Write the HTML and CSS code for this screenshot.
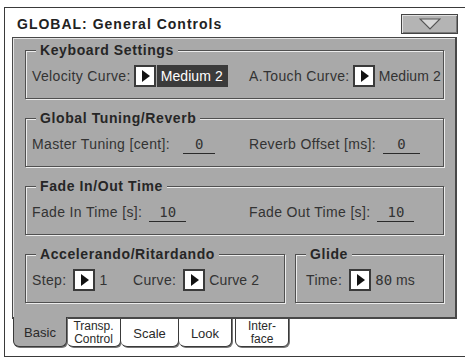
FILE: index.html
```html
<!DOCTYPE html>
<html lang="en">

<head>
    <meta charset="UTF-8">
    <meta name="viewport" content="width=device-width, initial-scale=1.0">
    <title>GLOBAL: General Controls</title>
    <link rel="stylesheet" href="styles.css">
</head>

<body>
    <div class="screen">
        <div class="titlebar">
            <h1 class="titlebar__title">GLOBAL: General Controls</h1>
            <button class="titlebar__menu">
                <svg width="22" height="12" viewBox="0 0 22 12">
                    <polygon points="1,1 21,1 11,11" fill="#d8d8d8" stroke="#555" stroke-width="1.2" />
                </svg>
            </button>
        </div>

        <div class="panel">
            <div class="group">
                <div class="group__title">Keyboard Settings</div>
                <div class="group__row">
                    <div class="param">
                        <span class="param__label">Velocity Curve:</span>
                        <span class="arrow"></span>
                        <span class="param__value param__value--selected">Medium 2</span>
                    </div>
                    <div class="param">
                        <span class="param__label">A.Touch Curve:</span>
                        <span class="arrow"></span>
                        <span class="param__value">Medium 2</span>
                    </div>
                </div>
            </div>

            <div class="group">
                <div class="group__title">Global Tuning/Reverb</div>
                <div class="group__row">
                    <div class="param">
                        <span class="param__label">Master Tuning [cent]:</span>
                        <span class="field field--short">0</span>
                    </div>
                    <div class="param">
                        <span class="param__label">Reverb Offset [ms]:</span>
                        <span class="field">0</span>
                    </div>
                </div>
            </div>

            <div class="group">
                <div class="group__title">Fade In/Out Time</div>
                <div class="group__row">
                    <div class="param">
                        <span class="param__label">Fade In Time [s]:</span>
                        <span class="field">10</span>
                    </div>
                    <div class="param">
                        <span class="param__label">Fade Out Time [s]:</span>
                        <span class="field">10</span>
                    </div>
                </div>
            </div>

            <div class="group-pair">
                <div class="group group--accel">
                    <div class="group__title">Accelerando/Ritardando</div>
                    <div class="group__row group__row--accel">
                        <div class="param param--spaced">
                            <span class="param__label">Step:</span>
                            <span class="arrow"></span>
                            <span class="param__value">1</span>
                        </div>
                        <div class="param param--spaced">
                            <span class="param__label">Curve:</span>
                            <span class="arrow"></span>
                            <span class="param__value">Curve 2</span>
                        </div>
                    </div>
                </div>
                <div class="group group--glide">
                    <div class="group__title">Glide</div>
                    <div class="group__row group__row--single">
                        <div class="param param--spaced">
                            <span class="param__label">Time:</span>
                            <span class="arrow"></span>
                            <span class="param__value"><span class="digits">80</span> ms</span>
                        </div>
                    </div>
                </div>
            </div>
        </div>

        <div class="tabs">
            <div class="tab tab--active">Basic</div>
            <div class="tab tab--double">Transp.<br>Control</div>
            <div class="tab tab--wide">Scale</div>
            <div class="tab tab--look">Look</div>
            <div class="tab tab--double tab--apart">Inter-<br>face</div>
        </div>
    </div>
</body>

</html>
```

FILE: styles.css
```css
body {
    margin: 0;
    background-color: #fff;
    font-family: "Liberation Sans", Arial, sans-serif;
    color: #333;
}

.screen {
    box-sizing: border-box;
    height: 350px;
    margin: 7px 0 0 4px;
    border: 1px solid #3a3a3a;
    border-right: none;
}

/* title bar */
.titlebar {
    height: 29px;
    box-sizing: border-box;
    padding: 6px 7px 0 12px;
    display: flex;
    align-items: flex-start;
    justify-content: space-between;
}

.titlebar__title {
    margin: 0;
    font-size: 14px;
    line-height: 20px;
    letter-spacing: 1px;
    font-weight: bold;
    color: #222;
}

.titlebar__menu {
    width: 57px;
    height: 20px;
    padding: 0;
    display: flex;
    align-items: center;
    justify-content: center;
    background-color: #b4b4b4;
    border: 1px solid #444;
    box-shadow: inset 1px 1px 0 #e2e2e2, inset -1px -1px 0 #7a7a7a;
}

/* main panel */
.panel {
    box-sizing: border-box;
    width: 445px;
    height: 282px;
    margin-left: 7px;
    padding: 12px 0 0 12px;
    background-color: #a9a9a9;
    border: 1px solid #484848;
    border-right-width: 2px;
    border-bottom-width: 2px;
    box-shadow: inset 1px 1px 0 #e4e4e4;
    position: relative;
    z-index: 1;
}

.group {
    box-sizing: border-box;
    width: 419px;
    height: 49px;
    margin-bottom: 19px;
    border: 1px solid #505050;
    box-shadow: 1px 1px 0 #ececec, inset 1px 1px 0 #ececec;
}

.group__title {
    width: max-content;
    margin: -10px 0 0 10px;
    padding: 0 4px;
    background-color: #a9a9a9;
    font-size: 14px;
    line-height: 18px;
    font-weight: bold;
    letter-spacing: 0.6px;
    color: #262626;
}

.group__row {
    height: 24px;
    margin-top: 5px;
    padding-left: 6px;
    display: grid;
    grid-template-columns: 217px 1fr;
    align-items: center;
}

.group__row--accel {
    grid-template-columns: 101px 1fr;
}

.group__row--single {
    grid-template-columns: 1fr;
    padding-left: 10px;
}

.group-pair {
    display: flex;
    gap: 10px;
}

.group-pair .group--accel {
    width: 260px;
}

.group-pair .group--glide {
    width: 149px;
}

/* parameters */
.param {
    display: flex;
    align-items: center;
    font-size: 14px;
    letter-spacing: 0.35px;
    white-space: nowrap;
}

.param__label {
    margin-right: 3px;
}

.param--spaced .param__label {
    margin-right: 7px;
}

.arrow {
    box-sizing: border-box;
    flex: none;
    width: 22px;
    height: 22px;
    background-color: #fff;
    border: 2px solid #3a3a3a;
    display: flex;
    align-items: center;
    justify-content: center;
}

.arrow::before {
    content: "";
    border-left: 8px solid #111;
    border-top: 6px solid transparent;
    border-bottom: 6px solid transparent;
    margin-left: 2px;
}

.param__value {
    margin-left: 4px;
    line-height: 22px;
    letter-spacing: 0.1px;
}

.param__value--selected {
    margin-left: 1px;
    padding: 0 5px 0 4px;
    background-color: #3b3b3b;
    color: #fff;
}

.digits,
.field {
    font-family: "DejaVu Sans Mono", monospace;
    font-size: 14px;
    letter-spacing: 0;
}

.field {
    width: 37px;
    margin-left: 4px;
    padding-top: 1px;
    line-height: 18px;
    text-align: center;
    border-bottom: 1px solid #2a2a2a;
}

.field--short {
    width: 32px;
    margin-left: 10px;
}

/* tabs */
.tabs {
    margin: -2px 0 0 8px;
    display: flex;
}

.tab {
    box-sizing: border-box;
    width: 54px;
    height: 30px;
    padding-top: 2px;
    display: flex;
    align-items: center;
    justify-content: center;
    text-align: center;
    font-size: 13px;
    line-height: 13px;
    background-color: #fff;
    border: 1px solid #3a3a3a;
    border-left: none;
    border-radius: 0 0 6px 6px;
    box-shadow: 1px 1px 0 #777;
    color: #2a2a2a;
}

.tab--double {
    font-size: 12px;
    line-height: 13px;
}

.tab--active {
    background-color: #a9a9a9;
    border-left: 1px solid #3a3a3a;
    border-top: none;
    position: relative;
    z-index: 2;
}

.tab--wide {
    width: 58px;
}

.tab--look {
    width: 53px;
}

.tab--apart {
    margin-left: 3px;
    border-left: 1px solid #3a3a3a;
}
```
